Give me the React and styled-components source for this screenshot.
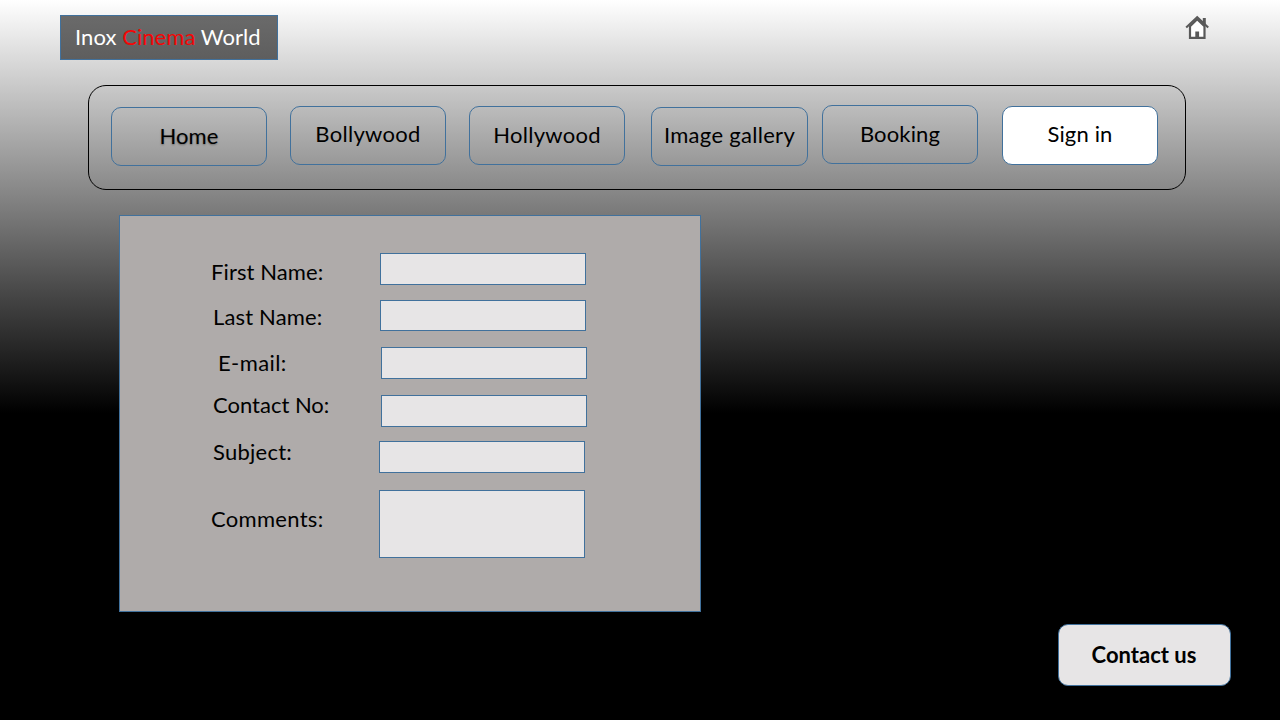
import React from 'react';
import styled, { createGlobalStyle } from 'styled-components';

const line = '#41719c';

const GlobalStyle = createGlobalStyle`
  * { box-sizing: border-box; }
  body {
    margin: 0;
    background: #000;
    font-family: Lato, "Liberation Sans", sans-serif;
    font-size: 22px;
    color: #000;
  }
`;

const Page = styled.div`
  display: flex;
  flex-direction: column;
  width: 1280px;
  height: 720px;
  overflow: hidden;
  background: linear-gradient(#fff 0, #bcbcbc 107px, #888 190px, #434343 300px, #000 413px);
`;

const Header = styled.header`
  display: flex;
  justify-content: space-between;
  align-items: flex-start;
  height: 85px;
  padding: 15px 70px 0 60px;
`;

const Brand = styled.div`
  width: 218px;
  height: 45px;
  padding-left: 14px;
  border: 1px solid ${line};
  background: linear-gradient(#6a6a6a, #5e5e5e);
  color: #fff;
  line-height: 42px;
  letter-spacing: 0.06px;
  white-space: pre;
`;

const Accent = styled.span`
  color: #f40606;
`;

const HomeIcon = styled.svg`
  display: block;
  width: 26px;
  height: 26px;
  margin-top: -1px;
`;

const Nav = styled.nav`
  display: flex;
  align-items: flex-start;
  width: 1098px;
  height: 105px;
  margin-left: 88px;
  padding: 19px 0 0 22px;
  border: 1px solid #000;
  border-radius: 18px;
`;

const NavButton = styled.button`
  flex: none;
  width: ${(p) => p.$width || 156}px;
  height: 59px;
  margin: ${(p) => p.$drop}px 0 0 ${(p) => p.$gap}px;
  padding: 0 0 ${(p) => p.$lift * 2}px;
  border: 1px solid ${line};
  border-radius: 10px;
  background: ${(p) => (p.$active ? '#fff' : 'transparent')};
  color: #000;
  font: inherit;
  letter-spacing: ${(p) => p.$spacing}px;
  white-space: nowrap;
  text-shadow: ${(p) => (p.$shadow ? '0 1px 2px rgba(0, 0, 0, 0.35)' : 'none')};
`;

const Form = styled.form`
  display: flex;
  flex-direction: column;
  width: 582px;
  height: 397px;
  margin: 25px 0 0 119px;
  padding-top: 37px;
  border: 1px solid ${line};
  background: #afabaa;
`;

const Row = styled.div`
  display: flex;
  align-items: flex-start;
  height: ${(p) => p.$height}px;
  margin-bottom: ${(p) => p.$after}px;
  padding-left: ${(p) => p.$indent}px;
`;

const Label = styled.label`
  flex: none;
  width: ${(p) => p.$width}px;
  margin-top: ${(p) => p.$drop}px;
  line-height: 27px;
  letter-spacing: ${(p) => p.$spacing}px;
`;

const Field = styled.input`
  width: 206px;
  height: 100%;
  margin: 0;
  padding: 0 6px;
  border: 1px solid ${line};
  border-radius: 0;
  background: #e7e5e6;
  font: inherit;
  resize: none;
`;

const Footer = styled.footer`
  display: flex;
  justify-content: flex-end;
  padding: 12px 49px 0 0;
`;

const ContactButton = styled.button`
  width: 173px;
  height: 62px;
  padding: 0 1px 2px 0;
  border: 1px solid ${line};
  border-radius: 10px;
  background: #e7e5e6;
  color: #000;
  font: inherit;
  font-weight: 700;
`;

const tabs = [
  { text: 'Home', gap: 0, drop: 2, lift: 1, spacing: 0.1, shadow: true },
  { text: 'Bollywood', gap: 23, drop: 1, lift: 2, spacing: 0.3 },
  { text: 'Hollywood', gap: 23, drop: 1, lift: 1, spacing: 0.3 },
  { text: 'Image gallery', gap: 26, drop: 2, lift: 2, spacing: 0.3, width: 157 },
  { text: 'Booking', gap: 14, drop: 0, lift: 1, spacing: 0.15 },
  { text: 'Sign in', gap: 24, drop: 1, lift: 2, spacing: 0.15 , active: true },
];

const fields = [
  { id: 'first', text: 'First Name:', indent: 91, width: 169, drop: 5, height: 32, after: 15, spacing: 0.1 },
  { id: 'last', text: 'Last Name:', indent: 93, width: 167, drop: 3, height: 31, after: 16, spacing: 0.15 },
  { id: 'email', text: 'E-mail:', indent: 98, width: 163, drop: 2, height: 32, after: 16, spacing: 0.4 },
  { id: 'phone', text: 'Contact No:', indent: 93, width: 168, drop: -4, height: 32, after: 14, spacing: 0 },
  { id: 'subject', text: 'Subject:', indent: 93, width: 166, drop: -3, height: 32, after: 17, spacing: 0.25 },
  { id: 'comments', text: 'Comments:', indent: 91, width: 168, drop: 15, height: 68, after: 0, spacing: 0.3, multi: true },
];

export default function App() {
  return (
    <Page>
      <GlobalStyle />
      <Header>
        <Brand>
          Inox <Accent>Cinema</Accent> World
        </Brand>
        <HomeIcon viewBox="0 0 26 26" aria-label="Home">
          <path d="M18.8 4h3v7l-3-3z" fill="#595959" />
          <path d="M6 12.2L13.2 5.2l7.3 7v11.6H6z" fill="#fff" stroke="#595959" strokeWidth="2.2" />
          <path d="M2.2 13.6L13.2 3.1l11 10.5" fill="none" stroke="#595959" strokeWidth="2.1" />
          <path d="M11.3 17.5h3.8v7h-3.8z" fill="#595959" />
        </HomeIcon>
      </Header>
      <Nav>
        {tabs.map((t) => (
          <NavButton
            key={t.text}
            type="button"
            $gap={t.gap}
            $drop={t.drop}
            $lift={t.lift}
            $spacing={t.spacing}
            $width={t.width}
            $active={t.active}
            $shadow={t.shadow}
          >
            {t.text}
          </NavButton>
        ))}
      </Nav>
      <Form>
        {fields.map((f) => (
          <Row key={f.id} $height={f.height} $after={f.after} $indent={f.indent}>
            <Label htmlFor={f.id} $width={f.width} $drop={f.drop} $spacing={f.spacing}>
              {f.text}
            </Label>
            <Field as={f.multi ? 'textarea' : 'input'} id={f.id} />
          </Row>
        ))}
      </Form>
      <Footer>
        <ContactButton type="button">Contact us</ContactButton>
      </Footer>
    </Page>
  );
}
